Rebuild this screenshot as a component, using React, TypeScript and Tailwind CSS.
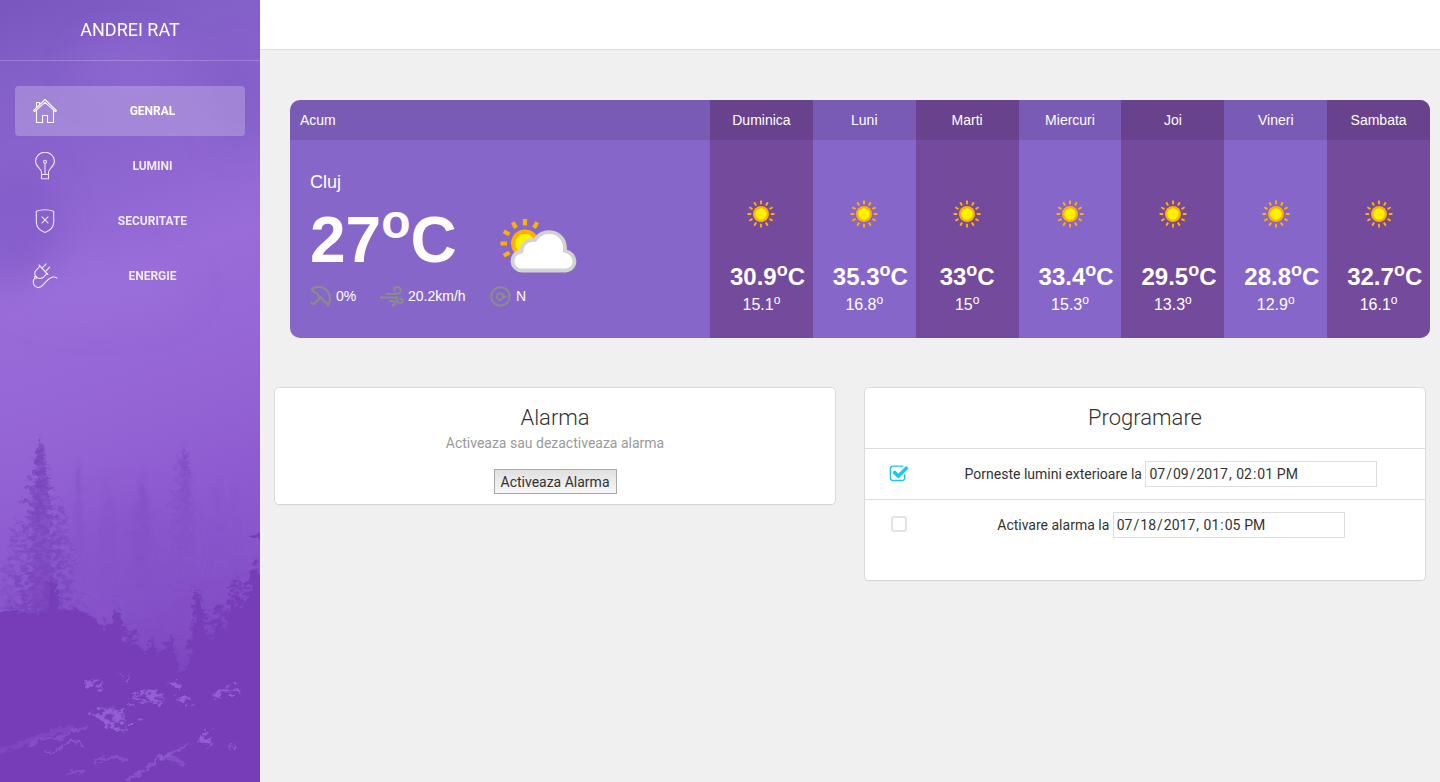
import React, { useState } from "react";

type IconProps = { className?: string };

function rng(seed: number) {
  let s = seed;
  return () => {
    s = (s * 16807) % 2147483647;
    return s / 2147483647;
  };
}

/* Conifer outline: ragged branches widening towards the base. */
function conifer(cx: number, top: number, base: number, half: number, step: number, seed: number) {
  const r = rng(seed);
  const left: string[] = [];
  const right: string[] = [];
  for (let y = top; y < base; y += step) {
    const t = (y - top) / (base - top);
    const w = half * (0.05 + Math.pow(t, 0.6) * 0.95);
    const out = w * (0.5 + r() * 0.6);
    const out2 = w * (0.5 + r() * 0.6);
    left.push(`${(cx - out).toFixed(1)},${(y + step * 0.7).toFixed(1)}`, `${(cx - w * 0.45).toFixed(1)},${(y + step * 0.9).toFixed(1)}`);
    right.push(`${(cx + out2).toFixed(1)},${(y + step * 0.6).toFixed(1)}`, `${(cx + w * 0.45).toFixed(1)},${(y + step * 0.9).toFixed(1)}`);
  }
  return `${cx},${top - 6} ${right.join(" ")} ${left.reverse().join(" ")}`;
}

function Forest() {
  return (
    <svg className="absolute inset-0 h-full w-full" viewBox="0 0 260 782" preserveAspectRatio="none" aria-hidden="true">
      <defs>
        <linearGradient id="sky" x1="0" y1="0" x2="0.12" y2="1">
          <stop offset="0" stopColor="#7856bd" />
          <stop offset="0.1" stopColor="#835fc8" />
          <stop offset="0.25" stopColor="#8c65cf" />
          <stop offset="0.4" stopColor="#996cd9" />
          <stop offset="0.56" stopColor="#9565d5" />
          <stop offset="0.68" stopColor="#8f5dd1" />
          <stop offset="0.82" stopColor="#8753ca" />
          <stop offset="1" stopColor="#763db8" />
        </linearGradient>
        <linearGradient id="fade" x1="0" y1="0" x2="0" y2="1">
          <stop offset="0" stopColor="#7843ba" stopOpacity="0.75" />
          <stop offset="0.6" stopColor="#7843ba" stopOpacity="0.55" />
          <stop offset="1" stopColor="#7740ba" stopOpacity="0.75" />
        </linearGradient>
        <linearGradient id="haze" x1="0" y1="0" x2="0" y2="1">
          <stop offset="0" stopColor="#7c49bf" stopOpacity="0.5" />
          <stop offset="1" stopColor="#8450c6" stopOpacity="0" />
        </linearGradient>
        <filter id="soft" x="-20%" y="-20%" width="140%" height="140%">
          <feTurbulence type="fractalNoise" baseFrequency="0.1" numOctaves="3" seed="9" />
          <feDisplacementMap in="SourceGraphic" scale="10" xChannelSelector="R" yChannelSelector="G" />
          <feGaussianBlur stdDeviation="1.800" />
        </filter>
        <filter id="cloud" x="-50%" y="-50%" width="200%" height="200%">
          <feGaussianBlur stdDeviation="16" />
        </filter>
        <filter id="rough" x="-5%" y="-5%" width="110%" height="110%">
          <feTurbulence type="fractalNoise" baseFrequency="0.16" numOctaves="3" seed="4" />
          <feDisplacementMap in="SourceGraphic" scale="10" xChannelSelector="R" yChannelSelector="G" />
          <feGaussianBlur stdDeviation="0.5" />
        </filter>
        <filter id="mottle" x="-10%" y="-10%" width="120%" height="120%">
          <feTurbulence type="fractalNoise" baseFrequency="0.14 0.2" numOctaves="4" seed="7" result="n" />
          <feColorMatrix in="n" type="matrix" values="0 0 0 0 0  0 0 0 0 0  0 0 0 0 0  6 0 0 0 -2.4" result="m" />
          <feDisplacementMap in="SourceGraphic" in2="n" scale="14" xChannelSelector="R" yChannelSelector="G" result="d" />
          <feComposite in="d" in2="m" operator="in" />
          <feGaussianBlur stdDeviation="0.6" />
        </filter>
      </defs>
      <rect width="260" height="782" fill="url(#sky)" />
      <g filter="url(#cloud)">
        <ellipse cx="130" cy="70" rx="55" ry="30" fill="#9069d2" opacity="0.6" />
        <ellipse cx="20" cy="225" rx="40" ry="60" fill="#8059c6" opacity="0.6" />
        <ellipse cx="240" cy="100" rx="30" ry="50" fill="#7b57c2" opacity="0.4" />
        <ellipse cx="100" cy="290" rx="90" ry="30" fill="#9c70dc" opacity="0.5" />
        <ellipse cx="130" cy="550" rx="50" ry="50" fill="#824fc4" opacity="0.35" />
      </g>
      <g filter="url(#soft)">
        <polygon points={conifer(78, 462, 620, 14, 5, 11)} fill="url(#haze)" />
        <polygon points={conifer(108, 478, 610, 15, 5, 23)} fill="url(#haze)" opacity="0.5" />
        <polygon points={conifer(143, 476, 640, 26, 5, 37)} fill="url(#haze)" />
        <polygon points={conifer(218, 484, 630, 24, 5, 51)} fill="url(#haze)" opacity="0.4" />
        <polygon points={conifer(234, 490, 620, 16, 5, 61)} fill="url(#haze)" opacity="0.3" />
      </g>
      <g filter="url(#mottle)">
        <polygon points={conifer(41, 444, 635, 46, 5, 71)} fill="url(#fade)" />
        <polygon points={conifer(62, 500, 635, 32, 6, 97)} fill="url(#fade)" opacity="0.7" />
        <polygon points={conifer(16, 520, 635, 30, 6, 131)} fill="url(#fade)" opacity="0.6" />
        <polygon points={conifer(184, 446, 610, 34, 4, 103)} fill="url(#haze)" />
      </g>
      <g filter="url(#rough)">
        <polygon points={conifer(41, 440, 620, 20, 3, 83)} fill="url(#fade)" opacity="0.8" />
        <polygon points={conifer(185, 446, 600, 15, 3, 109)} fill="url(#haze)" />
      </g>
      <g filter="url(#mottle)" fill="#773eb9">
        <path d="M186 680 L188 650 L192 620 L196 584 L204 598 L210 624 L219 600 L226 606 L231 584 L238 576 L243 588 L250 576 L256 560 L274 552 L274 700 Z" />
        <path d="M95 640 L104 620 L112 622 L119 606 L127 620 L128 632 L138 628 L140 646 L147 652 L152 636 L160 652 L171 632 L178 650 L176 690 L95 690 Z" />
      </g>
      <g filter="url(#rough)" fill="#773eb9">
        <path d="M-10 614 L10 610 L34 614 L48 610 L50 582 L56 584 L59 610 L74 608 L90 614 L104 630 L112 624 L116 610 L122 622 L122 640 L136 646 L147 654 L152 640 L158 656 L166 652 L171 638 L176 656 L178 672 L186 668 L192 660 L193 630 L197 594 L203 606 L206 640 L216 640 L219 616 L226 630 L233 600 L240 610 L247 596 L256 574 L274 566 L274 800 L-10 800 Z" />
        <path d="M270 530 L247 536 L258 540 L270 550 Z" />
      </g>
      <g filter="url(#mottle)" fill="#a16ee0" opacity="0.7">
        <path d="M126 706 q8-18 30-18 q14 8 6 16 q-18-4-36 2Z" />
        <path d="M82 682 q10-6 20-2 l2 12 q-12-5-22-10Z" />
        <path d="M172 698 q12 -6 24 6 q-12 4-24-6Z" />
        <path d="M206 702 q12-16 32-18 l4 8 q-20 2-36 10Z" />
        <path d="M88 714 q16-10 36-5 l4 22 -18 4 q-2-14-22-21Z" />
        <path d="M165 681 l18 1 -2 8Z" />
        <path d="M117 672 l14 6 -4 4Z" />
        <path d="M196 742 q10-12 20-16 q-8 8-2 20Z" />
        <path d="M128 724 l18-8 -6 8Z" />
        <path d="M228 746 l12-2 -4 6Z" />
      </g>
      <g filter="url(#rough)" fill="none" stroke="#9c69dc" strokeLinecap="round">
        <path d="M28 746 Q42 736 58 739 Q76 728 88 728" strokeWidth="3" opacity="0.4" />
        <path d="M44 751 Q60 752 66 744 Q76 738 84 745" strokeWidth="2" opacity="0.5" />
        <path d="M96 762 Q108 753 126 760" strokeWidth="3" opacity="0.4" />
        <path d="M128 780 Q148 770 157 759 Q178 752 188 744" strokeWidth="3" opacity="0.45" />
        <path d="M160 757 Q176 756 184 764" strokeWidth="5" opacity="0.4" />
        <path d="M66 774 q8-4 16-1" strokeWidth="3" opacity="0.4" />
        <path d="M-4 752 q20-6 34-12 q20-8 42-12" strokeWidth="5" opacity="0.2" />
      </g>
    </svg>
  );
}

function Line({ className, children }: IconProps & { children: React.ReactNode }) {
  return (
    <svg className={className} viewBox="0 0 28 28" fill="none" stroke="currentColor" strokeWidth="1.1" strokeLinejoin="round" strokeLinecap="round" aria-hidden="true">
      {children}
    </svg>
  );
}

const HomeIcon = ({ className }: IconProps) => (
  <Line className={className}>
    <path d="M2.500 13.700 14 2.500l11.500 11.200-1 1L14 5.300 3.500 14.700z" />
    <path d="M5.500 13.200V25.500h6v-7h5v7h6V13.200" />
    <path d="M5.500 10.500V5.500h3v2" />
  </Line>
);

const BulbIcon = ({ className }: IconProps) => (
  <Line className={className}>
    <path d="M10.500 22.500v-2.200c0-3.600-5.900-5.600-5.900-10.900a9.400 9.200 0 0 1 18.800 0c0 5.300-5.900 7.300-5.900 10.900v2.200z" />
    <path d="M10.500 22.500v4.300h7v-4.300M14 11.200v11.300" />
    <circle cx="14" cy="9.700" r="1.500" />
  </Line>
);

const ShieldIcon = ({ className }: IconProps) => (
  <Line className={className}>
    <path d="M14 2.700c3.200 0 6.200.5 8.700 1.500V15c0 5-4 8.700-8.700 10.500C9.300 23.700 5.300 20 5.300 15V4.200c2.500-1 5.500-1.500 8.700-1.500z" />
    <path d="m11 9.800 6 6m0-6-6 6" />
  </Line>
);

const PlugIcon = ({ className }: IconProps) => (
  <Line className={className}>
    <path d="m8 3 8.900 9.500M9 4.200 5 8.300c-1.600 2-1.400 4.700.3 6.500 2 2 5 2 7.200.5l3.200-3.700" />
    <path d="m11.300 5.900 3.900-4M15 9l3.600-3.800" />
    <path d="M3.800 14.500h1.700v1.700H3.800z" />
    <path d="M3.700 16.200C1.600 18.800 1.800 22.500 4.300 24.400c2.600 1.800 5.800.8 8-1.800 2.600-3 5-6.400 8.700-7.400 1.900-.5 3.500-.1 4.900.7" />
  </Line>
);

function SunRays({ count, from, to, width, start = 0 }: { count: number; from: number; to: number; width: number; start?: number }) {
  return (
    <g stroke="#ffb000" strokeWidth={width}>
      {Array.from({ length: count }, (_, i) => (
        <path key={i} d={`M0 ${-from}V${-to}`} transform={`rotate(${start + i * 30})`} />
      ))}
    </g>
  );
}

const SunIcon = ({ className }: IconProps) => (
  <svg className={className} viewBox="-14 -14 28 28" aria-hidden="true">
    <SunRays count={12} from={9.8} to={13.5} width={1.9} />
    <circle r="8" fill="#ffb000" />
    <circle r="5.700" fill="#fff200" />
  </svg>
);

const PartlyCloudyIcon = ({ className }: IconProps) => (
  <svg className={className} viewBox="0 0 78 56" aria-hidden="true">
    <g transform="translate(25 25.500)">
      <SunRays count={6} from={18} to={24.5} width={4.2} start={-120} />
      <circle r="14" fill="#ffb000" />
      <circle r="9.800" fill="#fff200" />
    </g>
    <path d="M22.500 52.500a9.500 9.500 0 0 1-1-19c0-8 7-12.500 13.500-11.500 8-13.500 29.500-9 30 7.500 0 1.500 0 2.500-.2 3.500 6 1 9.700 5.500 9.700 10.300 0 5-4 9.200-9 9.200z" fill="#fff" stroke="#d2d2d2" strokeWidth="3.800" strokeLinejoin="round" />
  </svg>
);

const UmbrellaIcon = ({ className }: IconProps) => (
  <svg className={className} viewBox="0 0 21 21" fill="none" stroke="currentColor" strokeWidth="2" strokeLinejoin="round" aria-hidden="true">
    <path d="M1.500 3.500C6-.5 13.500.3 17.300 5.200c3.700 4.800 3.200 10.300.7 14.300-.8-2.500-2.500-3.800-4.700-4.200-.4-2.500-2.200-4.300-4.700-4.700C8.300 8 6.300 6 3.800 6.300 3.500 5 2.700 4 1.500 3.500z" />
    <path d="M10.500 11.500 4.800 17c-1.600 1.800-4 .6-3.300-1.600" />
  </svg>
);

const WindIcon = ({ className }: IconProps) => (
  <svg className={className} viewBox="0 0 24 21" fill="none" stroke="currentColor" strokeWidth="2" aria-hidden="true">
    <path d="M6 8h10.500c5.500-.5 5.500-7 .7-7-3.700 0-4.200 4.300-1 4.500" />
    <path d="M0 11.500h18.500" />
    <path d="M9 15h3.500c3.500 0 3 5-.8 4.500" />
    <path d="M16.500 11.500c-.5 6.500 6.300 7.500 6.300 3.300 0-2.400-3-2.400-3-.2" />
  </svg>
);

const CompassIcon = ({ className }: IconProps) => (
  <svg className={className} viewBox="0 0 21 21" fill="none" stroke="currentColor" strokeWidth="2" aria-hidden="true">
    <circle cx="10.500" cy="10.500" r="9.300" />
    <circle cx="10" cy="10.500" r="3.200" />
    <path d="m13 8 4.500 2.500L13 13z" fill="currentColor" stroke="none" />
  </svg>
);

const CheckedIcon = ({ className }: IconProps) => (
  <svg className={className} viewBox="0 0 1792 1792" fill="currentColor" aria-hidden="true">
    <path d="M1472 930v318q0 119-84.500 203.500t-203.500 84.500h-832q-119 0-203.500-84.500t-84.500-203.500v-832q0-119 84.500-203.500t203.500-84.500h832q63 0 117 25 15 7 18 23 3 17-9 29l-49 49q-10 10-23 10-3 0-9-2-23-6-45-6h-832q-66 0-113 47t-47 113v832q0 66 47 113t113 47h832q66 0 113-47t47-113v-254q0-13 9-22l64-64q10-10 23-10 6 0 12 3 20 8 20 29zm231-489l-814 814q-24 24-57 24t-57-24l-430-430q-24-24-24-57t24-57l110-110q24-24 57-24t57 24l263 263 647-647q24-24 57-24t57 24l110 110q24 24 24 57t-24 57z" />
  </svg>
);

const nav = [
  { label: "GENRAL", Icon: HomeIcon, active: true },
  { label: "LUMINI", Icon: BulbIcon, active: false },
  { label: "SECURITATE", Icon: ShieldIcon, active: false },
  { label: "ENERGIE", Icon: PlugIcon, active: false },
];

const days = [
  { name: "Duminica", high: "30.9", low: "15.1" },
  { name: "Luni", high: "35.3", low: "16.8" },
  { name: "Marti", high: "33", low: "15" },
  { name: "Miercuri", high: "33.4", low: "15.3" },
  { name: "Joi", high: "29.5", low: "13.3" },
  { name: "Vineri", high: "28.8", low: "12.9" },
  { name: "Sambata", high: "32.7", low: "16.1" },
];

const card = "rounded bg-white shadow-[0_1px_2px_rgba(0,0,0,0.05),0_0_0_1px_rgba(63,63,68,0.1)]";

function Sidebar() {
  return (
    <aside className="relative w-[260px] shrink-0 text-white">
      <Forest />
      <div className="relative">
        <div className="flex h-[61px] items-center justify-center border-b border-white/20">
          <a href="#" className="text-lg">ANDREI RAT</a>
        </div>
        <nav className="flex flex-col gap-[5px] px-[15px] pt-[25px]">
          {nav.map(({ label, Icon, active }) => (
            <a key={label} href="#" className={active ? "flex h-[50px] items-center rounded bg-white/[0.23] px-[15px]" : "flex h-[50px] items-center rounded px-[15px] opacity-85"}>
              <span className="mr-[15px] flex w-[30px] justify-center">
                <Icon className="size-7" />
              </span>
              <span className="flex-1 text-center text-xs font-bold">{label}</span>
            </a>
          ))}
        </nav>
      </div>
    </aside>
  );
}

function Day({ name, high, low }: { name: string; high: string; low: string }) {
  return (
    <div className="min-w-0 flex-1 text-center odd:bg-[#744a9d]">
      <div className="h-10 bg-black/10 text-sm leading-10">{name}</div>
      <div className="px-5 pt-[60px] whitespace-nowrap">
        <SunIcon className="mx-auto size-7" />
        <div className="mt-[34px] text-2xl leading-[30px] font-bold">
          {high}
          <sup>o</sup>C
        </div>
        <div className="text-base leading-[26px]">
          {low}
          <sup>o</sup>
        </div>
      </div>
    </div>
  );
}

function Weather() {
  return (
    <section className="flex overflow-hidden rounded-[10px] bg-[#8766ca] font-['Liberation_Sans',Arial,sans-serif] text-white">
      <div className="w-[420px] shrink-0">
        <div className="h-10 bg-black/10 px-[10px] text-sm leading-10">Acum</div>
        <div className="px-5 pt-[29px] pb-[31px]">
          <div className="text-lg leading-[26px]">Cluj</div>
          <div className="flex h-[90px] items-center">
            <div className="w-[190px] text-[64px] leading-[90px] font-bold">
              27<sup>o</sup>C
            </div>
            <PartlyCloudyIcon className="mt-3 h-14 w-[78px]" />
          </div>
          <div className="flex h-[22px] items-center text-sm">
            <span className="flex w-[70px] items-center gap-[5px]">
              <UmbrellaIcon className="size-[21px] text-[#8c8c8c]" />
              0%
            </span>
            <span className="flex w-[110px] items-center gap-1">
              <WindIcon className="h-[21px] w-6 text-[#8c8c8c]" />
              20.2km/h
            </span>
            <span className="flex items-center gap-[5px]">
              <CompassIcon className="size-[21px] text-[#8c8c8c]" />N
            </span>
          </div>
        </div>
      </div>
      <div className="flex min-w-0 flex-1">
        {days.map((d) => (
          <Day key={d.name} {...d} />
        ))}
      </div>
    </section>
  );
}

function ScheduleRow({ id, label, initial, on }: { id: string; label: string; initial: string; on: boolean }) {
  const [checked, setChecked] = useState(on);
  const [when, setWhen] = useState(initial);
  return (
    <tr className="h-[51px] border-t border-[#ddd]">
      <td className="w-[52px] pl-6">
        <label className="relative block h-[18px] w-5">
          <input
            type="checkbox"
            aria-label={label}
            checked={checked}
            onChange={(e) => setChecked(e.target.checked)}
            className="ml-[2px] block size-4 appearance-none rounded-[3px] border-2 border-[#e3e3e3] checked:border-transparent"
          />
          {checked && <CheckedIcon className="pointer-events-none absolute -top-px left-0 size-5 text-[#1dc7ea]" />}
        </label>
      </td>
      <td className="text-center">
        <label htmlFor={id}>{label}</label>{" "}
        <input
          id={id}
          type="datetime-local"
          value={when}
          onChange={(e) => setWhen(e.target.value)}
          className="h-[26px] w-[232px] border border-[#ddd] px-[2px] [&::-webkit-calendar-picker-indicator]:hidden"
        />
      </td>
    </tr>
  );
}

export default function App() {
  return (
    <div className="flex min-h-screen bg-[#f0f0f0] font-[Roboto,sans-serif] text-sm text-[#333]">
      <Sidebar />
      <div className="min-w-0 flex-1">
        <header className="h-[50px] border-b border-[#ddd] bg-white" />
        <main className="px-[15px] pt-[50px]">
          <div className="-mr-[5px] pl-[15px]">
            <Weather />
          </div>
          <div className="mt-[50px] grid grid-cols-2 items-start gap-[30px]">
            <section className={card}>
              <div className="px-[15px] pt-[15px] pb-[10px] text-center">
                <h4 className="text-[22px] leading-[30px] font-light">Alarma</h4>
                <p className="leading-5 text-[#9a9a9a]">Activeaza sau dezactiveaza alarma</p>
                <button type="button" className="mt-4 h-[25px] border border-[#a9a9a9] bg-linear-to-b from-[#e0e0e0] to-[#f8f8f8] px-[6px] leading-[22px]">
                  Activeaza Alarma
                </button>
              </div>
            </section>
            <section className={card}>
              <h4 className="px-[15px] pt-[15px] pb-[15px] text-center text-[22px] leading-[30px] font-light">Programare</h4>
              <table className="mb-[29px] w-full border-collapse">
                <tbody>
                  <ScheduleRow id="lights-at" label="Porneste lumini exterioare la" initial="2017-07-09T14:01" on />
                  <ScheduleRow id="alarm-at" label="Activare alarma la" initial="2017-07-18T13:05" on={false} />
                </tbody>
              </table>
            </section>
          </div>
        </main>
      </div>
    </div>
  );
}
